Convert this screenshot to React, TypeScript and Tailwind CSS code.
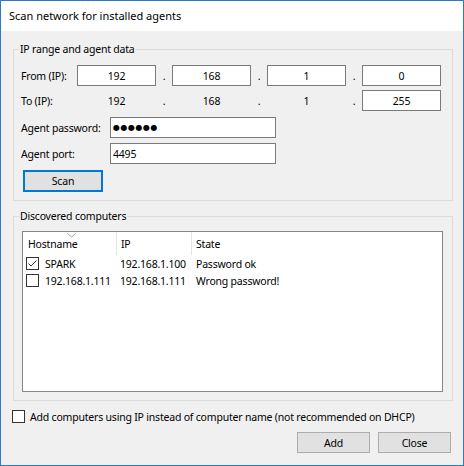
import React from "react";

function IpBox({ children }: { children: React.ReactNode }) {
  return (
    <div className="w-[79px] h-[21px] border border-[#7a7a7a] bg-white flex items-center justify-center">
      {children}
    </div>
  );
}

function IpText({ children }: { children: React.ReactNode }) {
  return <div className="w-[79px] h-[21px] flex items-center justify-center">{children}</div>;
}

function Dot() {
  return <div className="w-[16px] h-[21px] flex items-center justify-center">.</div>;
}

function Check({ checked }: { checked?: boolean }) {
  return (
    <div className="w-[13px] h-[13px] border border-[#333333] bg-white shrink-0 flex items-center justify-center">
      {checked && (
        <svg width="11" height="11" viewBox="0 0 11 11">
          <path d="M1.5 5.5 L4 8 L9.5 2.5" fill="none" stroke="#333333" strokeWidth="1" />
        </svg>
      )}
    </div>
  );
}

export default function App() {
  return (
    <div className="w-[464px] h-[466px] border border-[#2b79c9] bg-[#f0f0f0] flex flex-col font-['Noto_Sans',sans-serif] text-[10.5px] tracking-[-0.2px] leading-[16px] text-black select-none whitespace-nowrap">
      <div className="h-[30px] bg-white flex items-center pl-[8px] text-[11px] tracking-normal">
        Scan network for installed agents
      </div>

      <div className="flex-1 flex flex-col pt-[10px] pl-[12px] pr-[10px]">
        <fieldset className="border border-[#dcdcdc] w-[440px]">
          <legend className="ml-[5px] px-[1px]">IP range and agent data</legend>
          <div className="flex flex-col pt-[8px] pb-[8px] pl-[7px]">
            <div className="flex items-center">
              <span className="w-[56px]">From (IP):</span>
              <IpBox>192</IpBox>
              <Dot />
              <IpBox>168</IpBox>
              <Dot />
              <IpBox>1</IpBox>
              <Dot />
              <IpBox>0</IpBox>
            </div>
            <div className="flex items-center mt-[4px]">
              <span className="w-[56px]">To (IP):</span>
              <IpText>192</IpText>
              <Dot />
              <IpText>168</IpText>
              <Dot />
              <IpText>1</IpText>
              <Dot />
              <IpBox>255</IpBox>
            </div>
            <div className="flex items-center mt-[6px]">
              <span className="w-[89px]">Agent password:</span>
              <div className="w-[166px] h-[21px] border border-[#7a7a7a] bg-white flex items-center pl-[2px] text-[8px] tracking-[0.5px] font-['DejaVu_Sans',sans-serif]">
                ●●●●●●
              </div>
            </div>
            <div className="flex items-center mt-[5px]">
              <span className="w-[89px]">Agent port:</span>
              <div className="w-[166px] h-[21px] border border-[#7a7a7a] bg-white flex items-center pl-[2px]">
                4495
              </div>
            </div>
            <button className="mt-[6px] ml-[2px] w-[80px] h-[22px] border-2 border-[#0078d7] bg-[#e1e1e1] flex items-center justify-center">
              Scan
            </button>
          </div>
        </fieldset>

        <fieldset className="border border-[#dcdcdc] w-[440px] mt-[7px]">
          <legend className="ml-[5px] px-[1px]">Discovered computers</legend>
          <div className="pt-[7px] pb-[8px] pl-[8px]">
            <div className="w-[421px] h-[161px] border border-[#828790] bg-white flex flex-col">
              <div className="relative flex h-[23px]">
                <div className="w-[93px] flex items-center pl-[5px]">Hostname</div>
                <div className="w-[1px] bg-[#e5e5e5]" />
                <div className="w-[74px] flex items-center pl-[4px]">IP</div>
                <div className="w-[1px] bg-[#e5e5e5]" />
                <div className="flex-1 flex items-center pl-[4px]">State</div>
                <svg className="absolute left-[44px] top-[1px]" width="9" height="5" viewBox="0 0 9 5">
                  <path d="M0.5 0.5 L4.5 4 L8.5 0.5" fill="none" stroke="#a0a0a0" strokeWidth="1" />
                </svg>
              </div>
              <div className="flex h-[17px] items-center">
                <div className="w-[94px] flex items-center pl-[3px] gap-[6px]">
                  <Check checked />
                  <span>SPARK</span>
                </div>
                <div className="w-[75px] pl-[3px]">192.168.1.100</div>
                <div className="pl-[4px]">Password ok</div>
              </div>
              <div className="flex h-[17px] items-center">
                <div className="w-[94px] flex items-center pl-[3px] gap-[6px]">
                  <Check />
                  <span>192.168.1.111</span>
                </div>
                <div className="w-[75px] pl-[3px]">192.168.1.111</div>
                <div className="pl-[4px]">Wrong password!</div>
              </div>
            </div>
          </div>
        </fieldset>

        <div className="flex items-center h-[13px] mt-[9px] -ml-[1px] gap-[5px]">
          <Check />
          <span>Add computers using IP instead of computer name (not recommended on DHCP)</span>
        </div>

        <div className="flex justify-end gap-[8px] mt-[9px] mr-[2px]">
          <button className="w-[73px] h-[21px] border border-[#adadad] bg-[#e1e1e1] flex items-center justify-center">Add</button>
          <button className="w-[73px] h-[21px] border border-[#adadad] bg-[#e1e1e1] flex items-center justify-center">Close</button>
        </div>
      </div>
    </div>
  );
}
